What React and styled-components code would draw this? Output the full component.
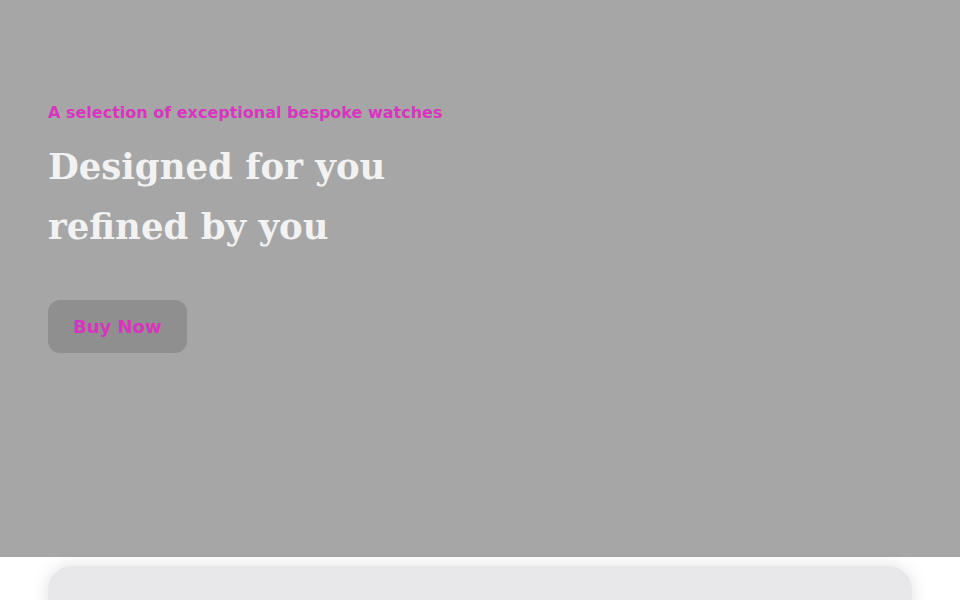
import React from "react";
import styled, { createGlobalStyle } from "styled-components";

const Global = createGlobalStyle`
  body {
    margin: 0;
    background: #ffffff;
    font-family: "DejaVu Sans", sans-serif;
  }
`;

const Hero = styled.section`
  height: 557px;
  background: #a6a6a6;
  padding: 103px 48px 0;
  box-sizing: border-box;
`;

const Tagline = styled.p`
  margin: 0;
  font-size: 16px;
  font-weight: 700;
  color: #d934bf;
  line-height: 20px;
`;

const Title = styled.h1`
  margin: 14px 0 0;
  font-family: "DejaVu Serif", serif;
  font-weight: 700;
  font-size: 35.5px;
  line-height: 60px;
  color: #f2f2f2;
`;

const BuyButton = styled.button`
  margin-top: 43px;
  height: 53px;
  padding: 0 25px;
  border: none;
  border-radius: 12px;
  background: #8f8f8f;
  color: #d934bf;
  font-family: "DejaVu Sans", sans-serif;
  font-weight: 700;
  font-size: 18px;
  cursor: pointer;
`;

const Below = styled.section`
  padding: 9px 48px 40px;
`;

const Card = styled.div`
  height: 200px;
  background: #e8e8ea;
  border-radius: 24px;
  box-shadow: 0 0 18px rgba(0, 0, 0, 0.12);
`;

const App = () => {
  return (
    <>
      <Global />
      <Hero>
        <Tagline>A selection of exceptional bespoke watches</Tagline>
        <Title>
          Designed for you
          <br />
          refined by you
        </Title>
        <BuyButton>Buy Now</BuyButton>
      </Hero>
      <Below>
        <Card />
      </Below>
    </>
  );
};

export default App;
